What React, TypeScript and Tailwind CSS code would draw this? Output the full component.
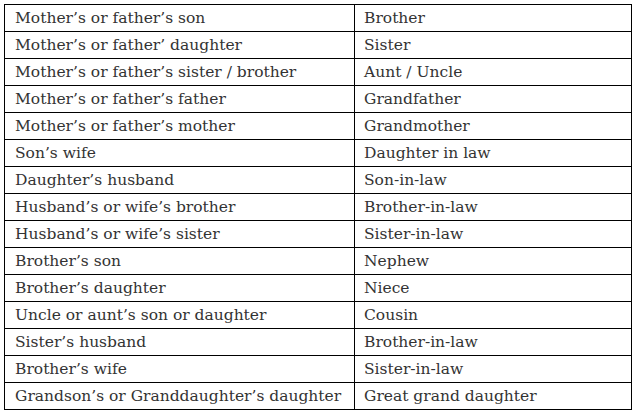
const rows: [string, string][] = [
  ["Mother’s or father’s son", "Brother"],
  ["Mother’s or father’ daughter", "Sister"],
  ["Mother’s or father’s sister / brother", "Aunt / Uncle"],
  ["Mother’s or father’s father", "Grandfather"],
  ["Mother’s or father’s mother", "Grandmother"],
  ["Son’s wife", "Daughter in law"],
  ["Daughter’s husband", "Son-in-law"],
  ["Husband’s or wife’s brother", "Brother-in-law"],
  ["Husband’s or wife’s sister", "Sister-in-law"],
  ["Brother’s son", "Nephew"],
  ["Brother’s daughter", "Niece"],
  ["Uncle or aunt’s son or daughter", "Cousin"],
  ["Sister’s husband", "Brother-in-law"],
  ["Brother’s wife", "Sister-in-law"],
  ["Grandson’s or Granddaughter’s daughter", "Great grand daughter"],
];

export default function App() {
  return (
    <div className="w-[635px] h-[414px] bg-white p-[4px]">
      <table
        className="border-collapse w-[628px] text-[#333] text-[15.5px] leading-none"
        style={{ fontFamily: "'DejaVu Serif', serif" }}
      >
        <tbody>
          {rows.map(([relation, name], i) => (
            <tr key={i} className="h-[27px]">
              <td className="border border-black w-[350px] pl-[10px] pt-[2px] align-middle">{relation}</td>
              <td className="border border-black pl-[9px] pt-[2px] align-middle">{name}</td>
            </tr>
          ))}
        </tbody>
      </table>
    </div>
  );
}
